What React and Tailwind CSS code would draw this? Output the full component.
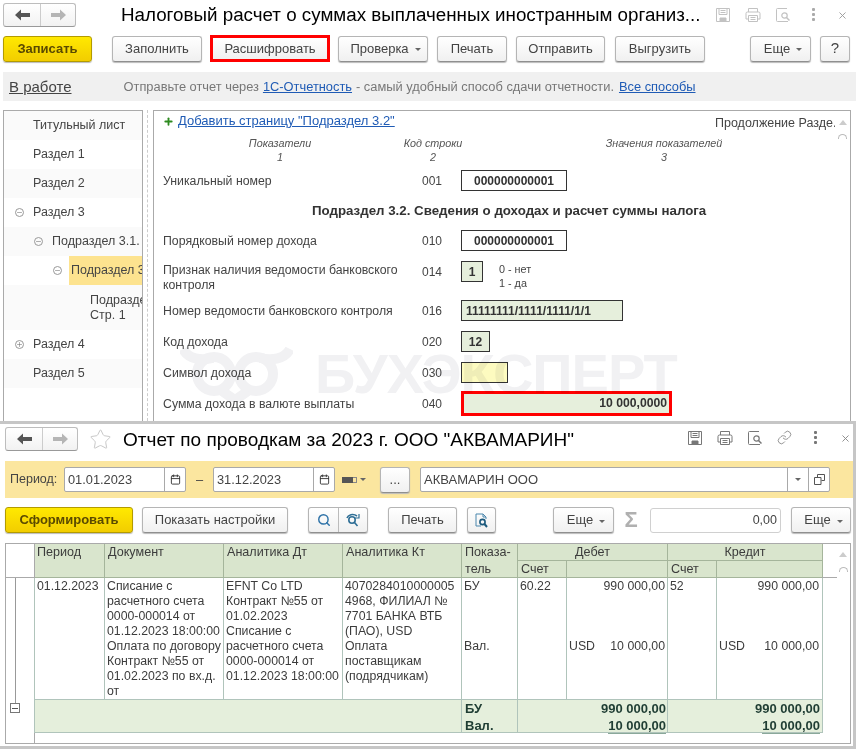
import React from "react";
import { Star, Link, X, Plus, Minus, Search, Calendar } from "lucide-react";

const Btn = ({ children, className = "", arrow }) => (
  <button className={`h-[26px] shrink-0 flex items-center justify-center rounded-[3px] border border-[#b5b5b5] border-b-[#8f8f8f] bg-gradient-to-b from-white to-[#f0f0f0] shadow-[0_1px_1px_#bbb] text-[13px] text-[#444] ${arrow ? "pl-[5px]" : ""} ${className}`}>
    {children}
    {arrow && <span className="ml-[6px] mt-[2px] border-x-[3px] border-t-[3px] border-x-transparent border-t-[#666]" />}
  </button>
);

const YellowBtn = ({ children, className = "" }) => (
  <button className={`h-[26px] shrink-0 flex items-center justify-center rounded-[3px] border border-[#b39b00] bg-gradient-to-b from-[#ffe900] to-[#f2cd00] shadow-[0_1px_1px_#bbb] text-[13px] font-bold text-[#5a4a00] ${className}`}>
    {children}
  </button>
);

const Arrow = ({ flip, className = "" }) => (
  <svg width="15" height="12" viewBox="0 0 15 12" className={`${flip ? "rotate-180" : ""} ${className}`}>
    <path d="M0 6l6-5.5V4h9v4H6v3.5z" fill="currentColor" />
  </svg>
);

const NavButtons = () => (
  <div className="w-[73px] h-[24px] shrink-0 flex rounded-[3px] border border-[#bdbdbd] border-b-[#999] bg-gradient-to-b from-white to-[#f2f2f2]">
    <div className="w-[37px] flex items-center justify-center border-r border-[#ccc]">
      <Arrow className="text-[#555]" />
    </div>
    <div className="flex-1 flex items-center justify-center">
      <Arrow flip className="text-[#b5b5b5]" />
    </div>
  </div>
);

const FloppyIcon = () => (
  <svg width="16" height="16" viewBox="0 0 16 16" fill="none" stroke="currentColor">
    <path d="M1.5 1.5h13v13h-13z" />
    <path d="M4 1.5v6h8v-6M5.5 3.5h5M5.5 5.5h5" />
    <path d="M5 11h6v3.5H5z" fill="currentColor" />
  </svg>
);

const PrinterIcon = () => (
  <svg width="16" height="16" viewBox="0 0 16 16" fill="none" stroke="currentColor">
    <path d="M3.5 5V1.5h9V5" />
    <path d="M3.5 12H1V6.5A1.5 1.5 0 0 1 2.5 5h11A1.5 1.5 0 0 1 15 6.5V12h-2.5" />
    <path d="M3.5 8.5h9v6h-9zM5.5 10.5h5M5.5 12.5h5" />
  </svg>
);

const PreviewIcon = () => (
  <svg width="16" height="16" viewBox="0 0 16 16" fill="none">
    <path d="M12 1.5H2.5a1 1 0 0 0-1 1v11a1 1 0 0 0 1 1H13" stroke="currentColor" />
    <circle cx="9.5" cy="8.5" r="2.7" stroke="currentColor" strokeWidth="1.2" />
    <path d="M11.5 10.5l3 3" stroke="currentColor" strokeWidth="1.5" />
  </svg>
);

const Dots = ({ className = "" }) => (
  <div className={`w-[14px] h-[14px] flex flex-col items-center justify-center gap-[2px] ${className}`}>
    <span className="w-[3px] h-[3px] bg-current rounded-[1px]" />
    <span className="w-[3px] h-[3px] bg-current rounded-[1px]" />
    <span className="w-[3px] h-[3px] bg-current rounded-[1px]" />
  </div>
);

const Expander = ({ open }) => (
  <span className="w-[9px] h-[9px] rounded-full border border-[#999] flex items-center justify-center shrink-0">
    {open ? <Minus size={7} className="text-[#777]" /> : <Plus size={7} className="text-[#777]" />}
  </span>
);

const TreeRow = ({ children, indent = 0, even, open, active, tall }) => (
  <div className={`flex ${tall ? "h-[45px]" : "h-[29px]"} ${even ? "bg-[#fafafa]" : "bg-white"}`}>
    <div className="flex items-center justify-end shrink-0" style={{ width: 29 + indent * 19 - 4 }}>
      {open !== undefined && <span className="mr-[5px]"><Expander open={open} /></span>}
    </div>
    <div className={`flex-1 flex items-center overflow-hidden whitespace-nowrap text-[12.5px] text-[#444] leading-[15px] ${active ? "bg-[#fde38f] ml-[2px] pl-[2px]" : "pl-[4px]"}`}>
      {children}
    </div>
  </div>
);

const Box = ({ children, className = "" }) => (
  <div className={`h-[21px] border border-[#333] flex items-center text-[12px] font-bold text-[#333] ${className}`}>
    {children}
  </div>
);

const FormRow = ({ label, code, children, className = "" }) => (
  <div className={`flex items-center h-[21px] ${className}`}>
    <div className="w-[259px] pt-[2px] text-[12.3px] leading-[15px] text-[#444]">{label}</div>
    <div className="w-[39px] text-[12px] text-[#444]">{code}</div>
    {children}
  </div>
);

const Watermark = () => (
  <div className="absolute left-[26px] top-[235px] flex items-center text-[#f1f1f3] mix-blend-multiply pointer-events-none">
    <svg width="113" height="55" viewBox="0 0 113 55" fill="none" stroke="currentColor" strokeWidth="10" className="mr-[22px]">
      <circle cx="34" cy="27" r="17" />
      <circle cx="76" cy="27" r="17" />
      <path d="M3 2c5 10 18 12 30 9M110 2c-5 10-18 12-30 9M42 44l13 9 13-9" />
    </svg>
    <span className="text-[56px] font-bold leading-[56px] tracking-[-1px] whitespace-nowrap">БУХЭКСПЕРТ</span>
  </div>
);

const TopWindow = () => (
  <div className="h-[421px] flex flex-col shrink-0">
    <div className="h-[35px] pl-[3px] pt-[3px] flex shrink-0">
      <NavButtons />
      <div className="ml-[45px] w-[579px] text-[18.8px] leading-[24px] text-black whitespace-nowrap shrink-0">Налоговый расчет о суммах выплаченных иностранным организ...</div>
      <div className="ml-[15px] flex items-start pt-[4px] text-[#c2c2c2]">
        <FloppyIcon />
        <span className="ml-[14px]"><PrinterIcon /></span>
        <span className="ml-[14px]"><PreviewIcon /></span>
        <Dots className="ml-[15px] text-[#aaa]" />
        <X size={11} className="ml-[17px] mt-[3px] text-[#999]" />
      </div>
    </div>
    <div className="h-[27px] pl-[3px] flex items-center shrink-0">
      <YellowBtn className="w-[89px]">Записать</YellowBtn>
      <Btn className="w-[90px] ml-[20px]">Заполнить</Btn>
      <div className="ml-[8px] w-[120px] h-[27px] border-[3px] border-[#f00] bg-gradient-to-b from-white to-[#f0f0f0] flex items-center justify-center text-[13px] text-[#444] shrink-0">Расшифровать</div>
      <Btn className="w-[90px] ml-[8px]" arrow>Проверка</Btn>
      <Btn className="w-[70px] ml-[9px]">Печать</Btn>
      <Btn className="w-[89px] ml-[9px]">Отправить</Btn>
      <Btn className="w-[90px] ml-[10px]">Выгрузить</Btn>
      <Btn className="w-[61px] ml-[45px]" arrow>Еще</Btn>
      <Btn className="w-[30px] ml-[9px] text-[15px]">?</Btn>
    </div>
    <div className="h-[29px] mt-[10px] ml-[3px] bg-[#f0f0f0] flex items-center shrink-0 text-[12.85px] whitespace-nowrap">
      <span className="ml-[6px] pt-[1px] text-[15px] text-[#444] underline">В работе</span>
      <span className="ml-[52px] text-[#777]">Отправьте отчет через</span>
      <span className="ml-[4px] text-[#1f5bb5] underline">1С-Отчетность</span>
      <span className="ml-[4px] text-[#777]">- самый удобный способ сдачи отчетности.</span>
      <span className="ml-[5px] text-[#1f5bb5] underline">Все способы</span>
    </div>
    <div className="flex-1 mt-[9px] ml-[3px] mr-[5px] flex min-h-0">
      <div className="w-[140px] border-l border-t border-r border-[#aaa] overflow-hidden shrink-0">
        <TreeRow even>Титульный лист</TreeRow>
        <TreeRow>Раздел 1</TreeRow>
        <TreeRow even>Раздел 2</TreeRow>
        <TreeRow open>Раздел 3</TreeRow>
        <TreeRow even indent={1} open>Подраздел 3.1.</TreeRow>
        <TreeRow indent={2} open active>Подраздел 3.2</TreeRow>
        <TreeRow even indent={3} tall><span>Подраздел<br />Стр. 1</span></TreeRow>
        <TreeRow open={false}>Раздел 4</TreeRow>
        <TreeRow even>Раздел 5</TreeRow>
      </div>
      <div className="w-[10px] pl-[4px] flex shrink-0">
        <div className="w-0 border-l border-dashed border-[#ccc]" />
      </div>
      <div className="flex-1 relative border-l border-t border-r border-[#aaa] overflow-hidden">
        <div className="pl-[9px]">
          <div className="flex items-center h-[18px] mt-[1px]">
            <Plus size={11} strokeWidth={4} className="text-[#2e8b20]" />
            <span className="ml-[4px] text-[13px] text-[#1f5bb5] underline">Добавить страницу "Подраздел 3.2"</span>
            <span className="absolute right-[15px] top-[3px] text-[12.5px] text-[#444] w-[120px] overflow-hidden whitespace-nowrap">Продолжение Разде.</span>
          </div>
          <div className="flex text-[10.8px] italic text-[#555] leading-[14px] mt-[6px] h-[30px]">
            <div className="w-[234px] text-center">Показатели<br />1</div>
            <div className="w-[72px] text-center">Код строки<br />2</div>
            <div className="w-[260px] text-center ml-[65px]">Значения показателей<br />3</div>
          </div>
          <FormRow label="Уникальный номер" code="001" className="mt-[4px]">
            <Box className="w-[106px] justify-center text-[12.6px]">000000000001</Box>
          </FormRow>
          <div className="h-[18px] mt-[11px] pl-[149px] text-[13.3px] leading-[18px] font-bold text-[#333] whitespace-nowrap">Подраздел 3.2. Сведения о доходах и расчет суммы налога</div>
          <FormRow label="Порядковый номер дохода" code="010" className="mt-[10px]">
            <Box className="w-[106px] justify-center text-[12.6px]">000000000001</Box>
          </FormRow>
          <div className="flex h-[30px] mt-[10px]">
            <div className="w-[259px] text-[12.3px] leading-[15px] text-[#444] pt-[2px]">Признак наличия ведомости банковского контроля</div>
            <div className="w-[39px] text-[12px] text-[#444] leading-[21px] pt-[1px]">014</div>
            <Box className="w-[22px] justify-center bg-[#e6efdc]">1</Box>
            <div className="ml-[16px] text-[10.8px] leading-[14px] text-[#444] pt-[1px]">0 - нет<br />1 - да</div>
          </div>
          <FormRow label="Номер ведомости банковского контроля" code="016" className="mt-[9px]">
            <Box className="w-[162px] pl-[4px] bg-[#e6efdc]">11111111/1111/1111/1/1</Box>
          </FormRow>
          <FormRow label="Код дохода" code="020" className="mt-[10px]">
            <Box className="w-[29px] justify-center bg-[#e6efdc]">12</Box>
          </FormRow>
          <FormRow label="Символ дохода" code="030" className="mt-[10px]">
            <Box className="w-[47px] bg-[#fdfbc0]" />
          </FormRow>
          <div className="flex items-center h-[25px] mt-[8px]">
            <div className="w-[259px] pt-[2px] text-[12.3px] text-[#444]">Сумма дохода в валюте выплаты</div>
            <div className="w-[39px] text-[12px] text-[#444]">040</div>
            <div className="w-[211px] h-[25px] border-[3px] border-[#f00] bg-[#e6efdc] flex items-center justify-end pr-[2px] text-[12.2px] font-bold text-[#333]">10 000,0000</div>
          </div>
        </div>
        <Watermark />
        <svg width="8" height="5" viewBox="0 0 8 5" className="absolute right-[3px] top-[9px] text-[#ccc]"><path d="M0 5l4-5 4 5z" fill="currentColor" /></svg>
        <div className="absolute right-[3px] top-[23px] w-[9px] h-[5px] rounded-t-full border-t border-x border-[#bbb]" />
      </div>
    </div>
  </div>
);

const HeadCell = ({ children, className = "" }) => (
  <div className={`bg-[#d9e5cd] border-r border-b border-[#a5b59b] text-[12.6px] leading-[17px] text-[#3c3c3c] ${className}`}>{children}</div>
);

const BodyCell = ({ children, className = "" }) => (
  <div className={`bg-white border-r border-[#b0c4bb] text-[12.3px] leading-[15px] text-[#3c3c3c] whitespace-pre-line ${className}`}>{children}</div>
);

const TotalCell = ({ children, className = "" }) => (
  <div className={`bg-[#e5efdc] border-y border-r border-[#b0c4bb] text-[13px] leading-[17px] font-bold text-[#1f3d33] ${className}`}>{children}</div>
);

const BottomWindow = () => (
  <div className="flex-1 min-h-0 bg-white border-r-[3px] border-[#c6c6c6] flex flex-col">
    <div className="h-[37px] flex items-start pt-[3px] pl-[5px] shrink-0">
      <NavButtons />
      <Star size={23} strokeWidth={1} className="ml-[11px] mt-[1px] text-[#c4c4c4]" />
      <div className="ml-[11px] text-[19px] leading-[26px] text-black whitespace-nowrap">Отчет по проводкам за 2023 г. ООО "АКВАМАРИН"</div>
      <div className="ml-auto mr-[2px] pt-[3px] flex items-start text-[#777]">
        <FloppyIcon />
        <span className="ml-[14px]"><PrinterIcon /></span>
        <span className="ml-[14px]"><PreviewIcon /></span>
        <Link size={15} strokeWidth={1.25} className="ml-[14px]" />
        <Dots className="ml-[16px]" />
        <X size={11} className="ml-[18px] mt-[3px] text-[#888]" />
      </div>
    </div>
    <div className="h-[37px] ml-[5px] bg-[#fbe69f] flex items-center text-[12.8px] text-[#444] shrink-0">
      <span className="ml-[5px] w-[54px] text-[12.5px]">Период:</span>
      <div className="w-[122px] h-[25px] flex rounded-[2px] border border-[#a9a9a9] bg-white">
        <span className="flex-1 pl-[3px] leading-[23px]">01.01.2023</span>
        <span className="w-[21px] border-l border-[#a9a9a9] flex items-center justify-center"><Calendar size={11} className="text-[#333]" /></span>
      </div>
      <span className="w-[27px] text-center">–</span>
      <div className="w-[122px] h-[25px] flex rounded-[2px] border border-[#a9a9a9] bg-white">
        <span className="flex-1 pl-[3px] leading-[23px]">31.12.2023</span>
        <span className="w-[21px] border-l border-[#a9a9a9] flex items-center justify-center"><Calendar size={11} className="text-[#333]" /></span>
      </div>
      <div className="ml-[7px] flex items-center w-[38px]">
        <span className="w-[11px] h-[6px] bg-[#555]" />
        <span className="w-[4px] h-[6px] border border-[#888] border-l-0" />
        <span className="ml-[3px] border-x-[3px] border-t-[3px] border-x-transparent border-t-[#666]" />
      </div>
      <Btn className="w-[30px] h-[25px] text-[11px]">...</Btn>
      <div className="ml-[10px] w-[410px] h-[25px] flex rounded-[2px] border border-[#a9a9a9] bg-white">
        <span className="flex-1 pl-[3px] leading-[23px] text-[13px]">АКВАМАРИН ООО</span>
        <span className="w-[21px] border-l border-[#a9a9a9] flex items-center justify-center"><span className="border-x-[3px] border-t-[3px] border-x-transparent border-t-[#666]" /></span>
        <span className="w-[21px] border-l border-[#a9a9a9] flex items-center justify-center">
          <svg width="11" height="11" viewBox="0 0 11 11" fill="none" stroke="#555"><path d="M3.5 3.5v-3h7v6h-3M.5 3.5h6.5v7H.5z" /></svg>
        </span>
      </div>
    </div>
    <div className="h-[26px] ml-[5px] mt-[9px] flex items-center shrink-0">
      <YellowBtn className="w-[128px]">Сформировать</YellowBtn>
      <Btn className="w-[146px] ml-[9px]">Показать настройки</Btn>
      <div className="ml-[20px] h-[26px] w-[60px] flex rounded-[3px] border border-[#b5b5b5] border-b-[#8f8f8f] bg-gradient-to-b from-white to-[#f0f0f0] shadow-[0_1px_1px_#bbb]">
        <span className="w-[30px] border-r border-[#bbb] flex items-center justify-center"><Search size={14} strokeWidth={2.5} className="text-[#2f73a8]" /></span>
        <span className="flex-1 flex items-center justify-center">
          <svg width="16" height="15" viewBox="0 0 16 15" fill="none" stroke="#2f6f96" strokeWidth="1.6"><circle cx="7" cy="7" r="3.2" /><path d="M9.5 9.5l3 3.5M2 5c1-3 6-5 10-2" /><path d="M14 1v4h-4" strokeWidth="1.2" /></svg>
        </span>
      </div>
      <Btn className="w-[69px] ml-[20px]">Печать</Btn>
      <Btn className="w-[29px] ml-[10px]">
        <svg width="15" height="15" viewBox="0 0 15 15" fill="none"><path d="M9 1H2v12h5M9 1l3 3v2M9 1v3h3" stroke="#4a87ad" /><circle cx="8.5" cy="9" r="2.6" stroke="#1c5a7d" strokeWidth="1.6" /><path d="M10.5 11l2.5 3" stroke="#1c5a7d" strokeWidth="2" /></svg>
      </Btn>
      <Btn className="w-[61px] ml-[57px]" arrow>Еще</Btn>
      <span className="w-[36px] pr-[2px] text-center text-[22px] leading-[26px] font-bold text-[#b0b0b0]">Σ</span>
      <div className="w-[131px] h-[25px] rounded-[3px] border border-[#d0d0d0] bg-white text-right pr-[3px] text-[12.5px] leading-[23px] text-[#444]">0,00</div>
      <Btn className="w-[60px] ml-[10px]" arrow>Еще</Btn>
    </div>
    <div className="ml-[5px] mr-[2px] mt-[10px] h-[201px] border border-[#aaa] relative overflow-hidden shrink-0">
      <div className="grid grid-cols-[29px_70px_119px_119px_119px_56px_49px_101px_49px_106px] grid-rows-[17px_17px_121px_34px]">
        <div className="row-span-2 border-r border-b border-[#aaa]" />
        <HeadCell className="row-span-2 pl-[2px]">Период</HeadCell>
        <HeadCell className="row-span-2 pl-[3px]">Документ</HeadCell>
        <HeadCell className="row-span-2 pl-[3px]">Аналитика Дт</HeadCell>
        <HeadCell className="row-span-2 pl-[3px]">Аналитика Кт</HeadCell>
        <HeadCell className="row-span-2 pl-[3px]">Показа-<br />тель</HeadCell>
        <HeadCell className="col-span-2 text-center">Дебет</HeadCell>
        <HeadCell className="col-span-2 text-center">Кредит</HeadCell>
        <HeadCell className="pl-[3px]">Счет</HeadCell>
        <HeadCell />
        <HeadCell className="pl-[3px]">Счет</HeadCell>
        <HeadCell />

        <div className="relative border-r border-[#b0c4bb]">
          <div className="absolute left-[9px] top-0 bottom-0 w-[1px] bg-[#999]" />
        </div>
        <BodyCell className="pl-[2px] pt-[1px]">01.12.2023</BodyCell>
        <BodyCell className="pl-[2px] pt-[1px]">{"Списание с\nрасчетного счета\n0000-000014 от\n01.12.2023 18:00:00\nОплата по договору\nКонтракт №55 от\n01.02.2023 по вх.д.\nот"}</BodyCell>
        <BodyCell className="pl-[2px] pt-[1px]">{"EFNT Co LTD\nКонтракт №55 от\n01.02.2023\nСписание с\nрасчетного счета\n0000-000014 от\n01.12.2023 18:00:00"}</BodyCell>
        <BodyCell className="pl-[2px] pt-[1px]">{"4070284010000005\n4968, ФИЛИАЛ №\n7701 БАНКА ВТБ\n(ПАО), USD\nОплата\nпоставщикам\n(подрядчикам)"}</BodyCell>
        <BodyCell className="pl-[2px] pt-[1px]">{"БУ\n\n\n\nВал."}</BodyCell>
        <BodyCell className="pl-[2px] pt-[1px]">60.22</BodyCell>
        <BodyCell className="pl-[2px] pr-[2px] pt-[1px]">
          <div className="text-right">990 000,00</div>
          <div className="flex justify-between mt-[45px]"><span>USD</span><span>10 000,00</span></div>
        </BodyCell>
        <BodyCell className="pl-[2px] pt-[1px]">52</BodyCell>
        <BodyCell className="pl-[2px] pr-[3px] pt-[1px]">
          <div className="text-right">990 000,00</div>
          <div className="flex justify-between mt-[45px]"><span>USD</span><span>10 000,00</span></div>
        </BodyCell>

        <div className="relative border-r border-[#b0c4bb] pt-[4px] pl-[4px]">
          <div className="absolute left-[9px] top-0 h-[4px] w-[1px] bg-[#999]" />
          <span className="w-[10px] h-[10px] border border-[#777] bg-white flex items-center justify-center">
            <span className="w-[6px] h-[1px] bg-[#555]" />
          </span>
        </div>
        <TotalCell className="col-span-4" />
        <TotalCell className="pl-[3px]">БУ<br />Вал.</TotalCell>
        <TotalCell className="col-span-2 pr-[1px] text-right">990 000,00<br /><span className="border-b border-[#8aa89a]">10 000,00</span></TotalCell>
        <TotalCell className="col-span-2 pr-[2px] text-right">990 000,00<br /><span className="border-b border-[#8aa89a]">10 000,00</span></TotalCell>
      </div>
      <div className="absolute left-[28px] top-[189px] h-[10px] w-[1px] bg-[#aaa]" />
      <svg width="8" height="5" viewBox="0 0 8 5" className="absolute right-[3px] top-[8px] text-[#ccc]"><path d="M0 5l4-5 4 5z" fill="currentColor" /></svg>
      <div className="absolute right-[2px] top-[23px] w-[9px] h-[5px] rounded-t-full border-t border-x border-[#bbb]" />
      <div className="absolute right-[13px] top-[33px] w-[15px] h-[1px] bg-[#aaa]" />
    </div>
  </div>
);

const App = () => (
  <div className="w-[856px] h-[749px] bg-white flex flex-col overflow-hidden font-['Liberation_Sans',Arial,sans-serif]">
    <TopWindow />
    <div className="h-[3px] bg-[#c6c6c6] shrink-0" />
    <BottomWindow />
    <div className="h-[3px] bg-[#c6c6c6] shrink-0" />
  </div>
);

export default App;
